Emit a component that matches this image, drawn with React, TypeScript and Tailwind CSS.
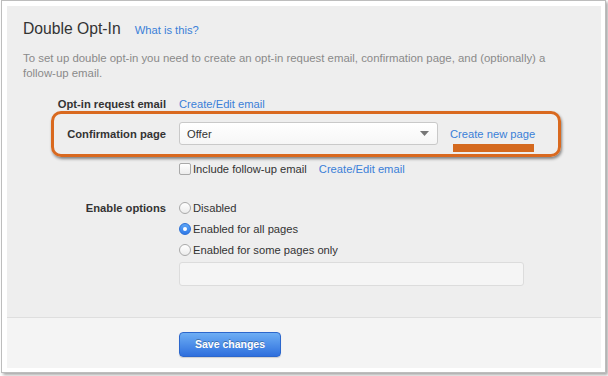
import React from "react";

const link = "text-[#3a7fd8]";

function Radio({ checked }: { checked?: boolean }) {
  if (checked) {
    return (
      <span className="w-[12px] h-[12px] rounded-full bg-gradient-to-b from-[#5ea6f6] to-[#2f7ae8] border border-[#2a6fd6] flex items-center justify-center shrink-0">
        <span className="w-[4px] h-[4px] rounded-full bg-white" />
      </span>
    );
  }
  return (
    <span className="w-[12px] h-[12px] rounded-full bg-gradient-to-b from-white to-[#ececec] border border-[#a9a9a9] shrink-0" />
  );
}

function Row({ label, children, className = "" }: { label?: string; children: React.ReactNode; className?: string }) {
  return (
    <div className={`flex items-center ${className}`}>
      <div className="w-[156px] pr-[13px] text-right font-bold text-[#333] shrink-0">{label}</div>
      <div className="flex items-center">{children}</div>
    </div>
  );
}

export default function App() {
  return (
    <div className="w-[608px] h-[376px] bg-white overflow-hidden font-['Liberation_Sans',Arial,sans-serif]">
      {/* window frame */}
      <div className="ml-[1px] w-[605px] h-[373px] border border-[#bdbdbd] bg-white pl-[5px] pt-[5px] shadow-[2px_2px_3px_rgba(0,0,0,0.35)]">
        <div className="w-[594px] h-[362px] bg-[#eeeeee] flex flex-col">
          <div className="h-[312px] shrink-0 pl-[16px] pt-[14px] text-[11.2px] leading-[20px] border-b border-[#dedede]">
            <div className="flex items-baseline gap-[14px]">
              <h1 className="text-[15.7px] leading-[18px] text-[#333]">Double Opt-In</h1>
              <a className={`${link} text-[11.2px]`}>What is this?</a>
            </div>
            <p className="mt-[11px] w-[550px] text-[11.4px] leading-[15px] text-[#8a8a8a]">
              To set up double opt-in you need to create an opt-in request email, confirmation page, and (optionally) a follow-up email.
            </p>

            <Row label="Opt-in request email" className="mt-[13px] h-[20px]">
              <a className={link}>Create/Edit email</a>
            </Row>

            <div className="relative mt-[8px]">
              {/* annotation highlight */}
              <div className="absolute left-[28px] top-[-11px] w-[510px] h-[46px] rounded-[10px] border-[3px] border-[#d9691f] shadow-[1px_2px_3px_rgba(0,0,0,0.45)]" />
              <Row label="Confirmation page" className="h-[23px]">
                <div className="w-[259px] h-[23px] rounded-[3px] border border-[#c9c9c9] bg-gradient-to-b from-white to-[#f6f6f6] flex items-center justify-between pl-[7px] pr-[8px] text-[#333]">
                  <span>Offer</span>
                  <svg width="9" height="5" viewBox="0 0 9 5">
                    <path d="M0 0h9L4.5 5z" fill="#777" />
                  </svg>
                </div>
                <div className="relative ml-[12px]">
                  <a className={link}>Create new page</a>
                  <div className="absolute left-[3px] top-[20px] w-[81px] h-[8px] bg-[#d4691e]" />
                </div>
              </Row>
            </div>

            <Row className="mt-[16px] h-[16px]">
              <span className="w-[12px] h-[12px] rounded-[2px] border border-[#a9a9a9] bg-gradient-to-b from-white to-[#ececec] mr-[2px]" />
              <span className="text-[#333]">Include follow-up email</span>
              <a className={`${link} ml-[12px]`}>Create/Edit email</a>
            </Row>

            <Row label="Enable options" className="mt-[20px] h-[21px]">
              <Radio />
              <span className="ml-[2px] text-[#333]">Disabled</span>
            </Row>
            <Row className="h-[21px]">
              <Radio checked />
              <span className="ml-[2px] text-[#333]">Enabled for all pages</span>
            </Row>
            <Row className="h-[21px]">
              <Radio />
              <span className="ml-[2px] text-[#333]">Enabled for some pages only</span>
            </Row>
            <Row className="mt-[2px]">
              <div className="w-[345px] h-[24px] rounded-[3px] border border-[#dcdcdc] bg-[#f5f5f5]" />
            </Row>
          </div>

          <div className="flex-1 bg-[#f4f4f4] pl-[172px] pt-[13px]">
            <button className="w-[102px] h-[25px] rounded-[4px] border border-[#2c67cc] bg-gradient-to-b from-[#6eaef4] to-[#2f6fdd] text-white font-bold text-[10.5px] [text-shadow:0_-1px_0_rgba(0,0,0,0.3)] shadow-[0_1px_1px_rgba(0,0,0,0.15)]">
              Save changes
            </button>
          </div>
        </div>
      </div>
    </div>
  );
}
